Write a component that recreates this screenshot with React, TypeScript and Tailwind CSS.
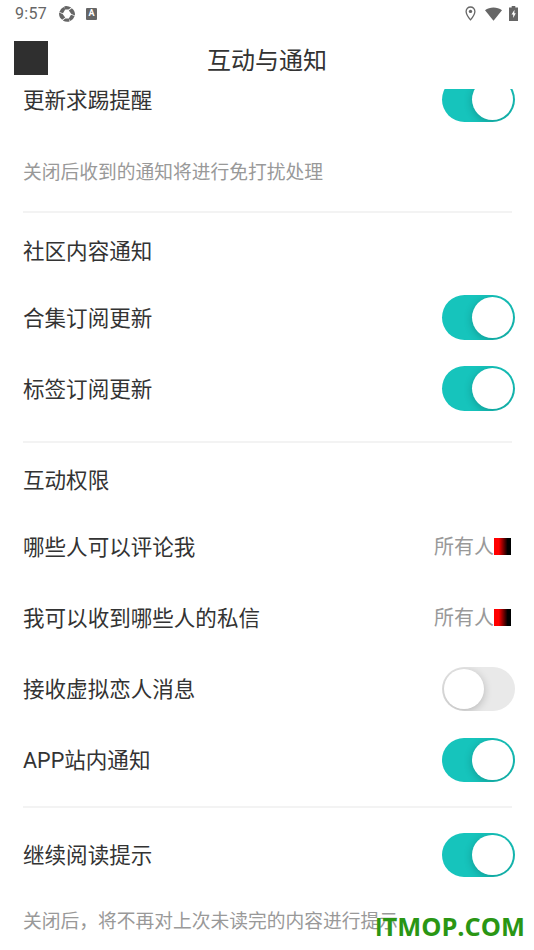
import React from 'react';

interface ToggleProps {
  on?: boolean;
}

const Toggle: React.FC<ToggleProps> = ({ on = false }) => (
  <div
    role="switch"
    aria-checked={on}
    className={`-mr-[3.6px] flex h-[44.5px] w-[73px] shrink-0 items-center overflow-hidden rounded-full px-[2px] ${
      on ? 'justify-end bg-[#16c4bc]' : 'justify-start bg-[#e9e9e9]'
    }`}
  >
    <div className="h-[40.5px] w-[40.5px] rounded-full bg-white shadow-[0_2px_9px_rgba(0,0,0,0.22)]" />
  </div>
);

interface RowProps {
  label: string;
  children?: React.ReactNode;
}

const Row: React.FC<RowProps> = ({ label, children }) => (
  <div className="flex h-[71.1px] items-center justify-between">
    <span className="pt-[2px] text-[21.55px] leading-none text-[#333]">{label}</span>
    {children}
  </div>
);

const Audience: React.FC<{ value: string }> = ({ value }) => (
  <div className="flex items-center text-[20px] leading-none text-[#999]">
    <span>{value}</span>
    <div className="h-[17px] w-[17px] bg-[linear-gradient(90deg,#f00_0%,#f00_28%,#000_80%)]" />
  </div>
);

const Heading: React.FC<{ text: string }> = ({ text }) => (
  <h2 className="flex h-[68.5px] items-center pt-[8px] text-[21.55px] leading-none text-[#333]">{text}</h2>
);

const Divider = () => <div className="-mr-px h-[2px] bg-[#f3f3f3]" />;

const StatusBar = () => (
  <div className="flex h-[27px] items-center justify-between pr-[16px] pl-[15px] text-[#666]">
    <div className="flex items-center">
      <span className="w-[44px] font-['Roboto',sans-serif] text-[16px] leading-none tracking-[0.3px]">9:57</span>
      {/* Shutter */}
      <svg width="16" height="16" viewBox="0 0 16 16" fill="currentColor">
        <path d="M5.4.3Q9-.5 12.2 1.6L9.6 3.6 5.2 3.4Z" />
        <path d="M12.8 2.2Q16.4 5 15.9 9.4L12.4 8 9.8 4.4Z" />
        <path d="M15.6 10Q14.6 13.4 11.4 15L9.8 12.4 12 8.8Z" />
        <path d="M10.6 15.5Q7 16.5 3.8 14.4L6.2 12.4 10.2 12.6Z" />
        <path d="M3.2 13.8Q-.4 11 .1 6.6L3.6 8 6.2 11.6Z" />
        <path d="M.4 6Q1.4 2.6 4.6 1L6.2 3.6 4 7.2Z" />
      </svg>
      <div className="ml-[11px] flex h-[12px] w-[11px] items-center justify-center rounded-[1px] bg-[#666] font-['Roboto',sans-serif] text-[9px] leading-none font-bold text-white">
        A
      </div>
    </div>
    <div className="flex items-center">
      <svg width="11" height="15" viewBox="0 0 11 15" fill="none">
        <path d="M5.5 1a4.4 4.4 0 0 0-4.4 4.4C1.1 8.6 5.5 13.8 5.5 13.8s4.4-5.2 4.4-8.4A4.4 4.4 0 0 0 5.5 1Z" stroke="currentColor" strokeWidth="1.3" />
        <circle cx="5.5" cy="5.4" r="1.7" fill="currentColor" />
      </svg>
      <svg className="ml-[9px]" width="17" height="14" viewBox="0 0 17 14" fill="currentColor">
        <path d="M0 3.2C4.7-.5 12.3-.5 17 3.2L8.5 13.8Z" />
      </svg>
      <svg className="ml-[7px]" width="9" height="15" viewBox="0 0 9 15">
        <path d="M2.7 0h3.6v1.4H9V15H0V1.4h2.7Z" fill="currentColor" />
        <path d="M5.5 3.8 2.5 8.4h1.7V12.1l2.6-4.8H5.3Z" fill="#fff" />
      </svg>
    </div>
  </div>
);

const App: React.FC = () => {
  return (
    <div className="relative flex h-[950px] w-[534px] flex-col overflow-hidden bg-white font-['Roboto','Noto_Sans_CJK_SC',sans-serif]">
      <StatusBar />

      <header className="grid h-[62px] grid-cols-[120px_1fr_120px] items-center">
        <div className="ml-[14px] h-[34px] w-[34px] bg-[#2f2f2f]" />
        <h1 className="pt-[5px] text-center text-[24px] leading-none text-[#333]">互动与通知</h1>
      </header>

      {/* Scrolled list, the first row is partly under the header */}
      <main className="min-h-0 flex-1 overflow-hidden pr-[23px] pl-[23px]">
        <div className="-mt-[25px]">
          <Row label="更新求踢提醒">
            <Toggle on />
          </Row>
          <p className="flex h-[76.4px] items-center text-[18.75px] leading-none text-[#999]">
            关闭后收到的通知将进行免打扰处理
          </p>
          <Divider />

          <Heading text="社区内容通知" />
          <Row label="合集订阅更新">
            <Toggle on />
          </Row>
          <Row label="标签订阅更新">
            <Toggle on />
          </Row>
          <div className="h-[16.5px]" />
          <Divider />

          <Heading text="互动权限" />
          <Row label="哪些人可以评论我">
            <Audience value="所有人" />
          </Row>
          <Row label="我可以收到哪些人的私信">
            <Audience value="所有人" />
          </Row>
          <Row label="接收虚拟恋人消息">
            <Toggle />
          </Row>
          <Row label="APP站内通知">
            <Toggle on />
          </Row>
          <div className="h-[10.5px]" />
          <Divider />

          <div className="h-[11.5px]" />
          <Row label="继续阅读提示">
            <Toggle on />
          </Row>
          <p className="flex h-[60px] items-center pt-[3px] text-[18.75px] leading-none text-[#999]">
            关闭后，将不再对上次未读完的内容进行提示
          </p>
        </div>
      </main>

      <div className="absolute top-[910px] left-[375px] font-['Open_Sans',sans-serif] text-[25.4px] leading-[32px] font-bold whitespace-nowrap text-[#2a9614]">
        <span className="font-['Lato',sans-serif]">I</span>TMOP.COM
      </div>
    </div>
  );
};

export default App;
